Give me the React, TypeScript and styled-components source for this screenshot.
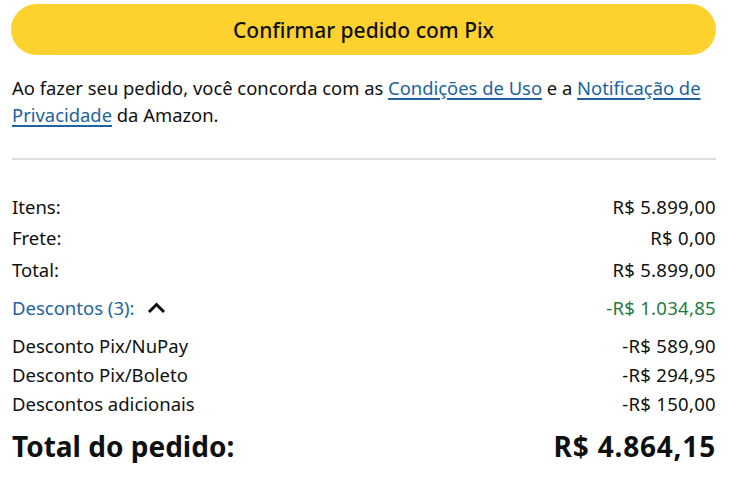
import React from "react";
import styled, { createGlobalStyle } from "styled-components";

const Global = createGlobalStyle`
  html, body { margin: 0; padding: 0; background: #fff; }
  body { font-family: "Noto Sans", "Open Sans", Arial, sans-serif; color: #0f1111; }
`;

const Page = styled.div`
  width: 740px;
  box-sizing: border-box;
  padding: 4px 24px 0 12px;
  display: flex;
  flex-direction: column;
`;

const PayButton = styled.button`
  margin-left: -1px;
  height: 51px;
  border: none;
  border-radius: 26px;
  background: #fed22e;
  font-family: inherit;
  font-size: 21px;
  font-weight: 500;
  color: #0f1111;
  cursor: pointer;
`;

const Legal = styled.p`
  margin: 19px 0 0;
  font-size: 18.4px;
  line-height: 27px;
  color: #0f1111;
`;

const Link = styled.a`
  color: #2162a1;
  text-decoration: underline;
  text-decoration-thickness: 2px;
  text-underline-offset: 3px;
`;

const Divider = styled.hr`
  margin: 30px 0 0;
  border: none;
  border-top: 2px solid #dcdcdc;
`;

const Rows = styled.div`
  margin-top: 35px;
  display: flex;
  flex-direction: column;
`;

const Row = styled.div<{ $gap?: number }>`
  display: flex;
  justify-content: space-between;
  align-items: center;
  height: 22px;
  margin-top: ${(p) => p.$gap ?? 0}px;
  font-size: 18.5px;
`;

const Label = styled.span<{ $tone?: "link" }>`
  display: flex;
  align-items: center;
  gap: 12px;
  color: ${(p) => (p.$tone === "link" ? "#2162a1" : "#0f1111")};
`;

const Value = styled.span<{ $tone?: "save" }>`
  letter-spacing: 0.3px;
  color: ${(p) => (p.$tone === "save" ? "#1e7b43" : "#0f1111")};
`;

const GrandRow = styled.div`
  display: flex;
  justify-content: space-between;
  align-items: center;
  height: 34px;
  margin-top: 15px;
  font-size: 28px;
  font-weight: 700;
`;

const GrandValue = styled.span`
  letter-spacing: 0.8px;
`;

const Caret = () => (
  <svg width="19" height="13" viewBox="0 0 19 13">
    <polyline points="2,11 9.5,3.5 17,11" fill="none" stroke="#0f1111" strokeWidth="3" />
  </svg>
);

export default function App() {
  return (
    <>
      <Global />
      <Page>
        <PayButton>Confirmar pedido com Pix</PayButton>
        <Legal>
          Ao fazer seu pedido, você concorda com as <Link href="#">Condições de Uso</Link> e a{" "}
          <Link href="#">Notificação de Privacidade</Link> da Amazon.
        </Legal>
        <Divider />
        <Rows>
          <Row>
            <Label>Itens:</Label>
            <Value>R$ 5.899,00</Value>
          </Row>
          <Row $gap={9}>
            <Label>Frete:</Label>
            <Value>R$ 0,00</Value>
          </Row>
          <Row $gap={10}>
            <Label>Total:</Label>
            <Value>R$ 5.899,00</Value>
          </Row>
          <Row $gap={16}>
            <Label $tone="link">
              Descontos (3):
              <Caret />
            </Label>
            <Value $tone="save">-R$ 1.034,85</Value>
          </Row>
          <Row $gap={16}>
            <Label>Desconto Pix/NuPay</Label>
            <Value>-R$ 589,90</Value>
          </Row>
          <Row $gap={7}>
            <Label>Desconto Pix/Boleto</Label>
            <Value>-R$ 294,95</Value>
          </Row>
          <Row $gap={7}>
            <Label>Descontos adicionais</Label>
            <Value>-R$ 150,00</Value>
          </Row>
          <GrandRow>
            <span>Total do pedido:</span>
            <GrandValue>R$ 4.864,15</GrandValue>
          </GrandRow>
        </Rows>
      </Page>
    </>
  );
}
